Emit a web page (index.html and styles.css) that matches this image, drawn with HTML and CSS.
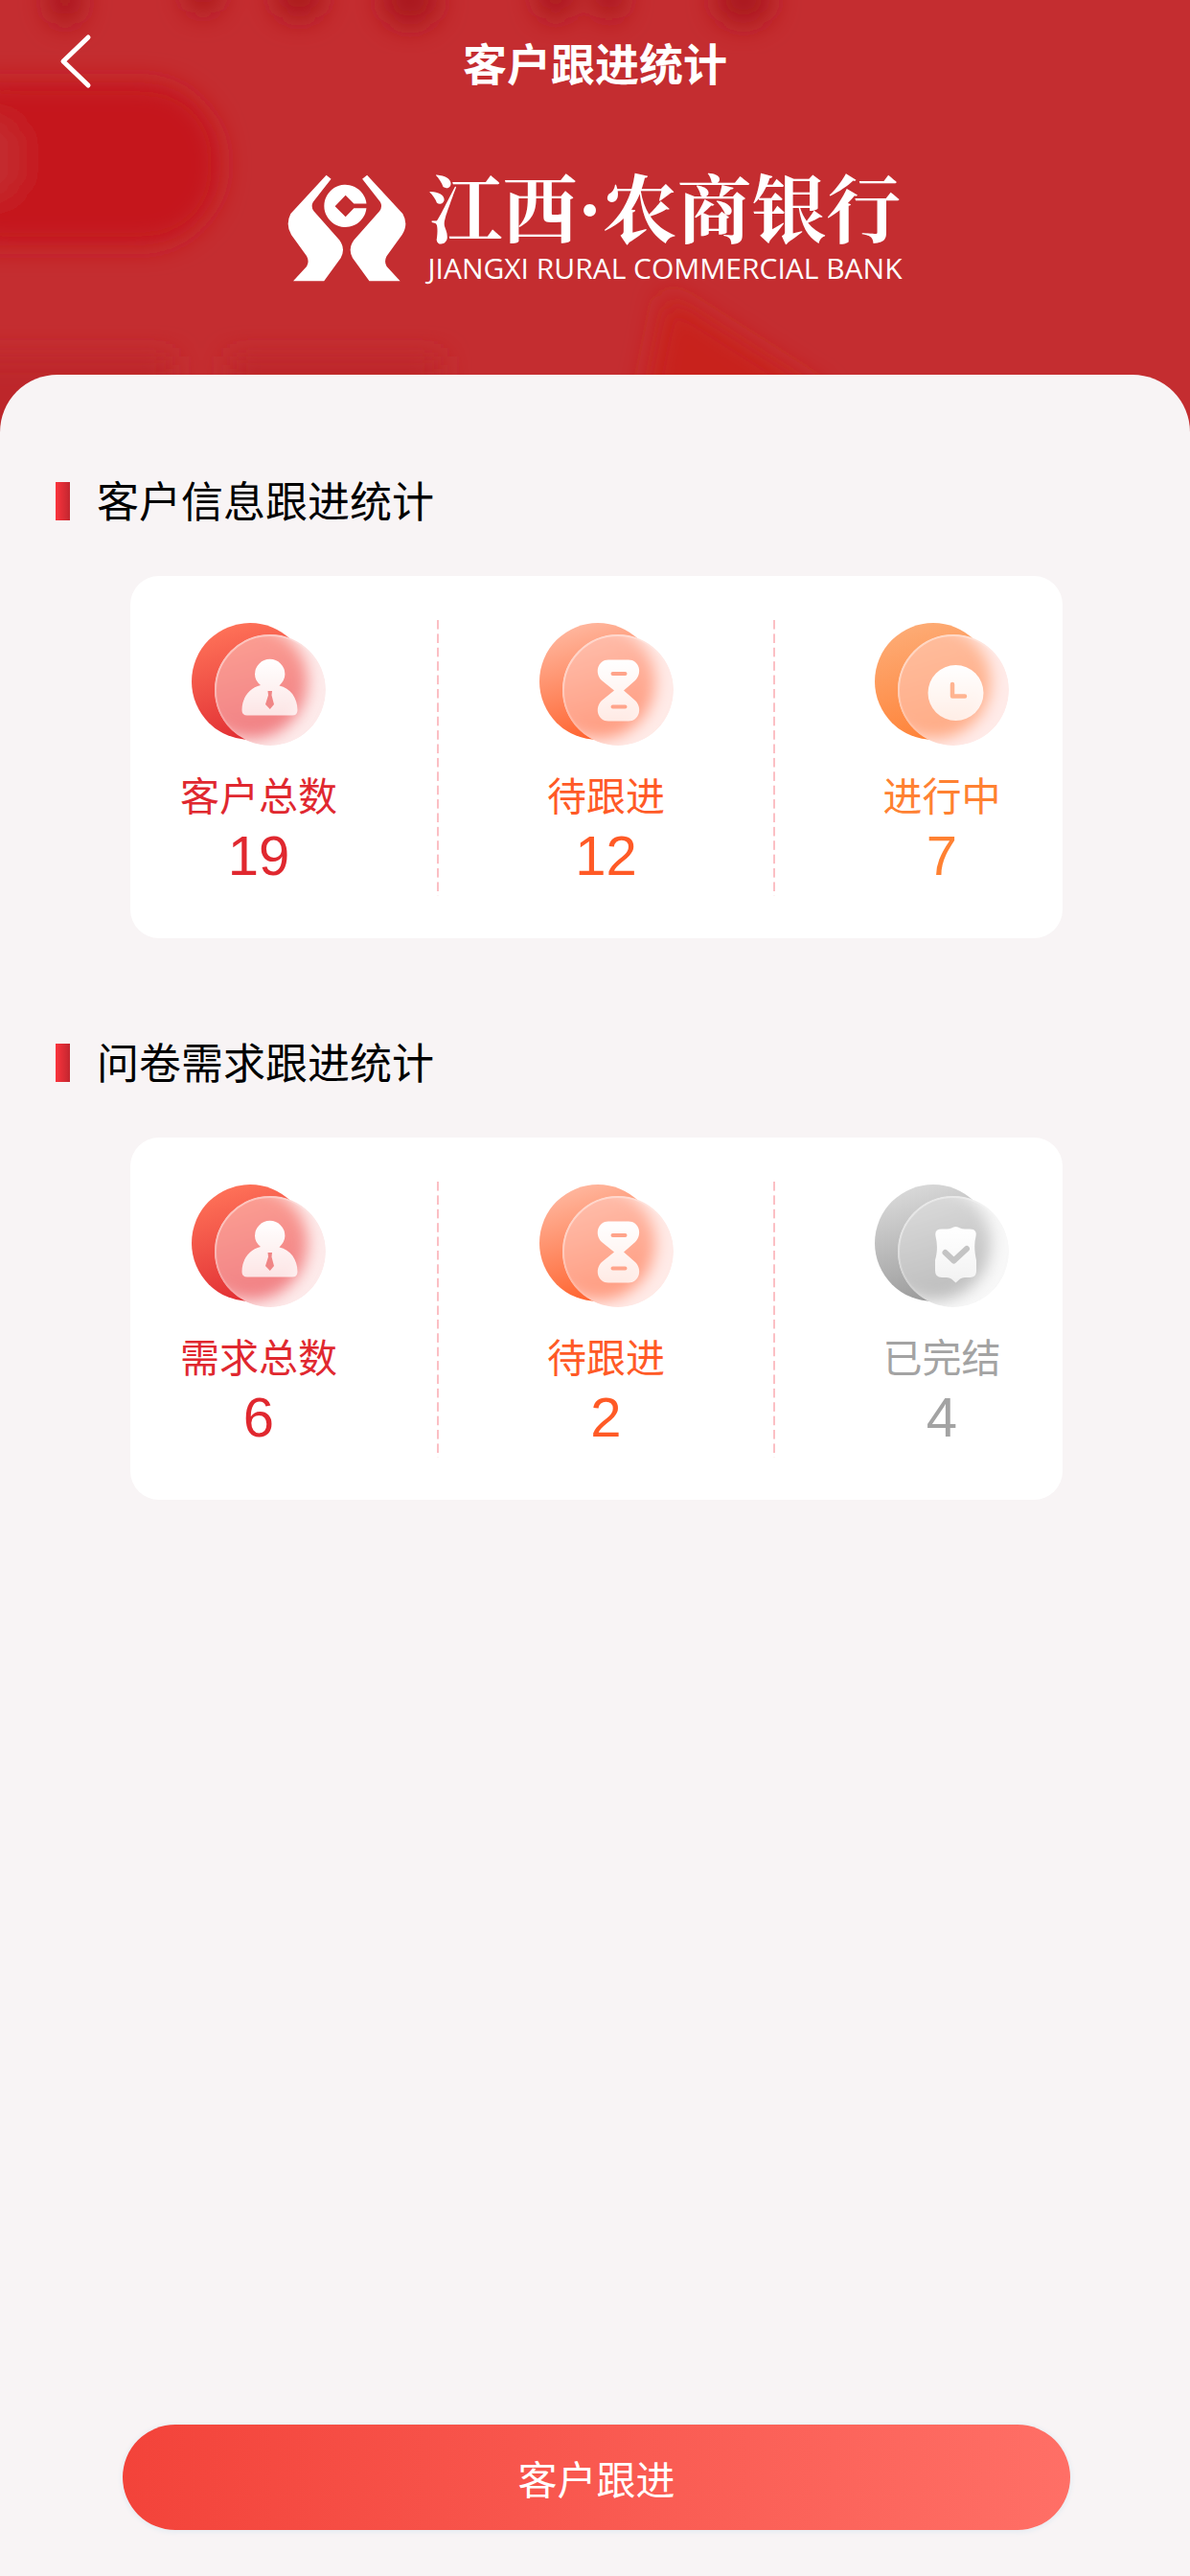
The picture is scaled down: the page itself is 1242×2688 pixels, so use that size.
FILE: index.html
```
<!DOCTYPE html>
<html lang="zh-CN">

<head>
    <meta charset="UTF-8">
    <meta name="viewport" content="width=device-width, initial-scale=1.0">
    <title>客户跟进统计</title>
    <link rel="stylesheet" href="styles.css">
</head>

<body>

    <!-- 公用渐变和图标 -->
    <svg class="defs" aria-hidden="true">
        <defs>
            <linearGradient id="red-back" x1="0.3" y1="0" x2="0.6" y2="1">
                <stop offset="0" stop-color="#ff7359" />
                <stop offset="1" stop-color="#e02c32" />
            </linearGradient>
            <linearGradient id="red-glass" x1="0.3" y1="0" x2="0.6" y2="1">
                <stop offset="0" stop-color="#fda294" />
                <stop offset="1" stop-color="#f07f84" />
            </linearGradient>
            <linearGradient id="coral-back" x1="0.3" y1="0" x2="0.6" y2="1">
                <stop offset="0" stop-color="#ffb8a0" />
                <stop offset="1" stop-color="#ff5f29" />
            </linearGradient>
            <linearGradient id="coral-glass" x1="0.3" y1="0" x2="0.6" y2="1">
                <stop offset="0" stop-color="#ffc2b1" />
                <stop offset="1" stop-color="#ff9a7e" />
            </linearGradient>
            <linearGradient id="orange-back" x1="0.3" y1="0" x2="0.6" y2="1">
                <stop offset="0" stop-color="#fdac76" />
                <stop offset="1" stop-color="#ff8136" />
            </linearGradient>
            <linearGradient id="orange-glass" x1="0.3" y1="0" x2="0.6" y2="1">
                <stop offset="0" stop-color="#ffbf9f" />
                <stop offset="1" stop-color="#ffab86" />
            </linearGradient>
            <linearGradient id="gray-back" x1="0.3" y1="0" x2="0.6" y2="1">
                <stop offset="0" stop-color="#dadada" />
                <stop offset="1" stop-color="#989898" />
            </linearGradient>
            <linearGradient id="gray-glass" x1="0.3" y1="0" x2="0.6" y2="1">
                <stop offset="0" stop-color="#dedede" />
                <stop offset="1" stop-color="#bcbcbc" />
            </linearGradient>
            <linearGradient id="glyph" x1="0" y1="0" x2="0" y2="1">
                <stop offset="0" stop-color="#ffffff" />
                <stop offset="1" stop-color="#ffffff" stop-opacity="0.78" />
            </linearGradient>
            <linearGradient id="rim" x1="0" y1="0" x2="1" y2="1">
                <stop offset="0.2" stop-color="#ffffff" stop-opacity="0.4" />
                <stop offset="0.6" stop-color="#ffffff" stop-opacity="0" />
            </linearGradient>
            <filter id="soft" x="-30%" y="-30%" width="160%" height="160%">
                <feGaussianBlur stdDeviation="8" />
            </filter>
            <clipPath id="front">
                <circle cx="82" cy="70" r="58" />
            </clipPath>
        </defs>

        <symbol id="icon-person" viewBox="0 0 140 128">
            <circle cx="61" cy="61" r="61" fill="url(#red-back)" />
            <g clip-path="url(#front)">
                <circle cx="82" cy="70" r="58" fill="#fdebeb" />
                <circle cx="61" cy="61" r="60" fill="url(#red-glass)" filter="url(#soft)" />
            </g>
            <circle cx="82" cy="70" r="57" fill="none" stroke="url(#rim)" stroke-width="2" />
            <path fill="url(#glyph)" d="M72 65C68 62 66 58 66 53.500a15.700 15.700 0 0 1 31.400 0C97.400 58 95 62 91.500 65.500C103 68 110.500 78 110.500 91Q110.500 96.500 105 96.500H58Q52.500 96.500 52.500 91C52.500 78 60 68 72 65Z" />
            <path fill="#f08585" d="M79.500 71h4.500l-.5 4.500L86 85l-4.200 5L77 85l3-9.500Z" />
        </symbol>

        <symbol id="icon-hourglass" viewBox="0 0 140 128">
            <circle cx="61" cy="61" r="61" fill="url(#coral-back)" />
            <g clip-path="url(#front)">
                <circle cx="82" cy="70" r="58" fill="#ffebe8" />
                <circle cx="61" cy="61" r="60" fill="url(#coral-glass)" filter="url(#soft)" />
            </g>
            <circle cx="82" cy="70" r="57" fill="none" stroke="url(#rim)" stroke-width="2" />
            <path fill="url(#glyph)" d="M72 38.500H93C104 38.500 108 52 100 60L88 70.500L100 81C108 89 104 102.500 93 102.500H72C61 102.500 57 89 65 81L78 70.500L65 60C57 52 61 38.500 72 38.500Z" />
            <path fill="none" stroke="#ffa48b" stroke-width="4" stroke-linecap="round" d="M76.500 53H89.500M76.500 87.500H89.500" />
        </symbol>

        <symbol id="icon-clock" viewBox="0 0 140 128">
            <circle cx="61" cy="61" r="61" fill="url(#orange-back)" />
            <g clip-path="url(#front)">
                <circle cx="82" cy="70" r="58" fill="#ffebe9" />
                <circle cx="61" cy="61" r="60" fill="url(#orange-glass)" filter="url(#soft)" />
            </g>
            <circle cx="82" cy="70" r="57" fill="none" stroke="url(#rim)" stroke-width="2" />
            <circle cx="84.500" cy="73" r="29" fill="url(#glyph)" />
            <path fill="none" stroke="#ffb491" stroke-width="4.500" stroke-linecap="round" stroke-linejoin="round" d="M81 64V76.500H94" />
        </symbol>

        <symbol id="icon-shield" viewBox="0 0 140 128">
            <circle cx="61" cy="61" r="61" fill="url(#gray-back)" />
            <g clip-path="url(#front)">
                <circle cx="82" cy="70" r="58" fill="#f8f8f8" />
                <circle cx="61" cy="61" r="60" fill="url(#gray-glass)" filter="url(#soft)" />
            </g>
            <circle cx="82" cy="70" r="57" fill="none" stroke="url(#rim)" stroke-width="2" />
            <path fill="url(#glyph)" d="M80 45.500Q84.500 42.500 89 45.500Q91 46.500 94 46.500H99Q107 46.500 105.500 54C103.500 62 104 70 106 79V90Q106 97 99 97H94Q91 97 89 98.500L84.500 102.500L80 98.500Q78 97 75 97H70Q63 97 63 90V79C65.500 70 65.500 62 63.500 54Q62 46.500 70 46.500H75Q78 46.500 80 45.500Z" />
            <path fill="none" stroke="#c4c4c4" stroke-width="6" stroke-linecap="round" stroke-linejoin="round" d="M73.500 71L82.500 79.500L96 67" />
        </symbol>
    </svg>

    <header class="header">
        <svg class="header-bg" viewBox="0 0 1242 480" preserveAspectRatio="none" aria-hidden="true">
            <defs>
                <filter id="blur" x="-50%" y="-50%" width="200%" height="200%">
                    <feGaussianBlur stdDeviation="14" />
                </filter>
            </defs>
            <g filter="url(#blur)">
                <rect x="-80" y="86" width="310" height="170" rx="80" fill="#c5141a" />
                <rect x="-60" y="120" width="84" height="90" rx="30" fill="#c42a2e" />
                <path d="M660 480L695 305L860 410V480Z" fill="#c8231e" />
                <path d="M-40 372H180V480H-40ZM240 372H460V480H240Z" fill="#bd2529" />
            </g>
            <g fill="#a9161c" filter="url(#blur)">
                <ellipse cx="68" cy="0" rx="18" ry="26" />
                <ellipse cx="212" cy="-6" rx="18" ry="20" />
                <ellipse cx="312" cy="-2" rx="26" ry="22" />
                <ellipse cx="428" cy="0" rx="30" ry="28" />
                <ellipse cx="580" cy="-4" rx="20" ry="24" />
                <ellipse cx="636" cy="-4" rx="16" ry="24" />
                <ellipse cx="776" cy="0" rx="30" ry="26" />
            </g>
        </svg>

        <div class="nav">
            <button class="back" type="button" aria-label="返回">
                <svg viewBox="0 0 34 58" aria-hidden="true">
                    <path d="M30 4L4 29L30 54" />
                </svg>
            </button>
            <h1 class="title">客户跟进统计</h1>
        </div>

        <div class="brand">
            <svg class="emblem" viewBox="34 66 370 334" aria-hidden="true">
                <path d="M155 68L170 80L114 152Q106 166 116 180L196 270Q216 298 200 326L148 398H52L94 352Q103 337 94 320L46 254Q27 222 44 188Z" />
                <path d="M282 68L267 80L323 152Q331 166 321 180L241 270Q221 298 237 326L289 398H385L343 352Q334 337 343 320L391 254Q412 222 393 188Z" />
                <path d="M280 157A66 66 0 1 0 280 171H241L215 198L182 165L215 131L241 157Z" />
            </svg>
            <div class="brand-text">
                <span class="brand-cn">江西·农商银行</span>
                <span class="brand-en">JIANGXI RURAL COMMERCIAL BANK</span>
            </div>
        </div>
    </header>

    <main class="sheet">
        <section class="group">
            <h2 class="group-title">客户信息跟进统计</h2>
            <div class="card">
                <div class="stat red">
                    <svg class="icon" aria-hidden="true"><use href="#icon-person" /></svg>
                    <span class="label">客户总数</span>
                    <span class="number">19</span>
                </div>
                <div class="divider"></div>
                <div class="stat coral">
                    <svg class="icon" aria-hidden="true"><use href="#icon-hourglass" /></svg>
                    <span class="label">待跟进</span>
                    <span class="number">12</span>
                </div>
                <div class="divider"></div>
                <div class="stat orange">
                    <svg class="icon" aria-hidden="true"><use href="#icon-clock" /></svg>
                    <span class="label">进行中</span>
                    <span class="number">7</span>
                </div>
            </div>
        </section>

        <section class="group">
            <h2 class="group-title">问卷需求跟进统计</h2>
            <div class="card">
                <div class="stat red">
                    <svg class="icon" aria-hidden="true"><use href="#icon-person" /></svg>
                    <span class="label">需求总数</span>
                    <span class="number">6</span>
                </div>
                <div class="divider"></div>
                <div class="stat coral">
                    <svg class="icon" aria-hidden="true"><use href="#icon-hourglass" /></svg>
                    <span class="label">待跟进</span>
                    <span class="number">2</span>
                </div>
                <div class="divider"></div>
                <div class="stat gray">
                    <svg class="icon" aria-hidden="true"><use href="#icon-shield" /></svg>
                    <span class="label">已完结</span>
                    <span class="number">4</span>
                </div>
            </div>
        </section>

        <button class="submit" type="button">客户跟进</button>
    </main>

</body>

</html>
```
FILE: styles.css
```
* {
    box-sizing: border-box;
}

body {
    display: flex;
    flex-direction: column;
    min-height: 100vh;
    margin: 0;
    background-color: #f8f4f5;
    font-family: "Liberation Sans", "Noto Sans CJK SC", sans-serif;
}

button {
    border: none;
    padding: 0;
    font-family: inherit;
    cursor: pointer;
}

.defs {
    position: absolute;
    width: 0;
    height: 0;
}

.header {
    position: relative;
    padding-bottom: 156px;
    background-color: #c42d30;
    color: #fff;
    overflow: hidden;
}

.header-bg {
    position: absolute;
    top: 0;
    left: 0;
    width: 100%;
    height: 480px;
}

.nav {
    position: relative;
    display: grid;
    grid-template-columns: 96px 1fr 96px;
    align-items: center;
    height: 136px;
}

.back {
    display: flex;
    justify-content: flex-end;
    background: none;
}

.back svg {
    width: 34px;
    height: 58px;
    margin-bottom: 8px;
    fill: none;
    stroke: #fff;
    stroke-width: 5;
    stroke-linecap: round;
    stroke-linejoin: round;
}

.title {
    margin: 0;
    font-size: 46px;
    font-weight: 700;
    line-height: 60px;
    text-align: center;
}

.brand {
    position: relative;
    display: flex;
    justify-content: center;
    align-items: flex-end;
    gap: 22px;
    padding-top: 36px;
}

.emblem {
    width: 124px;
    height: 112px;
    margin-bottom: 6px;
    fill: #fff;
}

.brand-text {
    display: flex;
    flex-direction: column;
    gap: 4px;
}

.brand-cn {
    font-family: "Noto Serif CJK SC", "Noto Sans CJK SC", serif;
    font-size: 78px;
    font-weight: 700;
    line-height: 84px;
}

.brand-en {
    font-family: "Open Sans", sans-serif;
    font-size: 30px;
    line-height: 40px;
}

.sheet {
    position: relative;
    display: flex;
    flex-direction: column;
    flex: 1;
    margin-top: -65px;
    padding: 104px 0 48px;
    border-radius: 60px 60px 0 0;
    background-color: #f8f4f5;
}

.group {
    margin-bottom: 102px;
}

.group-title {
    display: flex;
    align-items: center;
    gap: 28px;
    margin: 0 0 46px;
    padding-left: 58px;
    color: #000;
    font-size: 44px;
    font-weight: 400;
    line-height: 60px;
}

.group-title::before {
    content: "";
    width: 15px;
    height: 40px;
    margin-bottom: 4px;
    background: linear-gradient(to right, #fb343d, #c2262f);
}

.card {
    display: flex;
    justify-content: space-between;
    margin: 0 133px 0 136px;
    padding: 46px 56px 44px 52px;
    border-radius: 30px;
    background-color: #fff;
}

.stat {
    display: flex;
    flex-direction: column;
    align-items: center;
    padding-top: 3px;
}

.icon {
    width: 140px;
    height: 128px;
}

.label {
    margin-top: 26px;
    font-size: 41px;
    line-height: 56px;
}

.number {
    font-size: 58px;
    line-height: 66px;
}

.divider {
    width: 2px;
    height: 288px;
    background-image: linear-gradient(to bottom, #fbbfc4 64%, transparent 64%);
    background-size: 100% 5%;
}

.red {
    color: #e0282f;
}

.coral {
    color: #ff5a26;
}

.orange {
    color: #ff8132;
}

.gray {
    color: #a3a3a3;
}

.submit {
    height: 110px;
    margin: auto 125px 0 128px;
    border-radius: 55px;
    background: linear-gradient(to right, #f3433a, #ff6f66);
    box-shadow: 0 1px 4px 2px #e9edf2;
    color: #fff;
    font-size: 41px;
}
```
